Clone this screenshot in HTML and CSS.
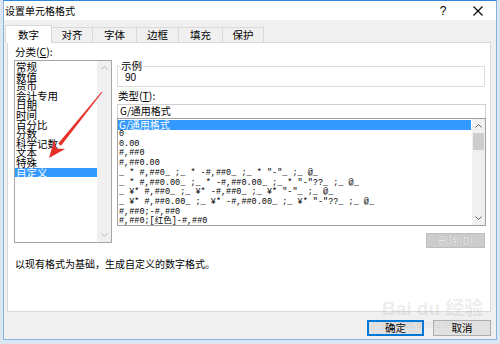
FILE: index.html
```html
<!DOCTYPE html>
<html lang="zh-CN">
<head>
    <meta charset="UTF-8">
    <meta name="viewport" content="width=device-width, initial-scale=1.0">
    <title>设置单元格格式</title>
    <link rel="stylesheet" href="styles.css">
</head>
<body>
    <div class="dialog">
        <!-- 标题栏 -->
        <div class="titlebar">
            <span class="title">设置单元格格式</span>
            <span class="help">?</span>
            <span class="close">
                <svg width="10" height="10" viewBox="0 0 10 10"><path d="M0.5 0.5 L9.5 9.5 M9.5 0.5 L0.5 9.5" stroke="#000" stroke-width="1.1" fill="none"/></svg>
            </span>
        </div>

        <!-- 选项卡 -->
        <div class="tabs">
            <span class="tab active w47">数字</span>
            <span class="tab w42">对齐</span>
            <span class="tab w45">字体</span>
            <span class="tab w43">边框</span>
            <span class="tab w45">填充</span>
            <span class="tab w42">保护</span>
        </div>

        <div class="panel">
            <div class="cols">
                <div class="left">
                    <div class="label">分类(<u>C</u>):</div>
                    <div class="listbox catlist">
                        <ul class="items">
                            <li>常规</li>
                            <li>数值</li>
                            <li>货币</li>
                            <li>会计专用</li>
                            <li>日期</li>
                            <li>时间</li>
                            <li>百分比</li>
                            <li>分数</li>
                            <li>科学记数</li>
                            <li>文本</li>
                            <li>特殊</li>
                            <li class="selected">自定义</li>
                        </ul>
                        <div class="scroll">
                            <span class="arrow-btn"><svg width="7" height="4" viewBox="0 0 7 4"><path d="M0.5 3.5 L3.5 0.5 L6.5 3.5" fill="none" stroke="#b4b4b4"/></svg></span>
                            <span class="arrow-btn"><svg width="7" height="4" viewBox="0 0 7 4"><path d="M0.5 0.5 L3.5 3.5 L6.5 0.5" fill="none" stroke="#b4b4b4"/></svg></span>
                        </div>
                    </div>
                </div>

                <div class="right">
                    <fieldset class="sample">
                        <legend>示例</legend>
                        <div class="sample-value">90</div>
                    </fieldset>
                    <div class="label type-label">类型(<u>T</u>):</div>
                    <div class="input">G/通用格式</div>
                    <div class="listbox typelist">
                        <ul class="codes">
                            <li class="selected cjk">G/通用格式</li>
                            <li>0</li>
                            <li>0.00</li>
                            <li>#,##0</li>
                            <li>#,##0.00</li>
                            <li>_ * #,##0_ ;_ * -#,##0_ ;_ * "-"_ ;_ @_ </li>
                            <li>_ * #,##0.00_ ;_ * -#,##0.00_ ;_ * "-"??_ ;_ @_ </li>
                            <li>_ ¥* #,##0_ ;_ ¥* -#,##0_ ;_ ¥* "-"_ ;_ @_ </li>
                            <li>_ ¥* #,##0.00_ ;_ ¥* -#,##0.00_ ;_ ¥* "-"??_ ;_ @_ </li>
                            <li>#,##0;-#,##0</li>
                            <li>#,##0;[红色]-#,##0</li>
                        </ul>
                        <div class="scroll narrow">
                            <span class="arrow-btn"><svg width="7" height="4" viewBox="0 0 7 4"><path d="M0.5 3.5 L3.5 0.5 L6.5 3.5" fill="none" stroke="#606060"/></svg></span>
                            <span class="thumb"></span>
                            <span class="track"></span>
                            <span class="arrow-btn"><svg width="7" height="4" viewBox="0 0 7 4"><path d="M0.5 0.5 L3.5 3.5 L6.5 0.5" fill="none" stroke="#606060"/></svg></span>
                        </div>
                    </div>
                    <div class="del-row">
                        <button class="btn disabled">删除(D)</button>
                    </div>
                </div>
            </div>
            <p class="desc">以现有格式为基础，生成自定义的数字格式。</p>
        </div>

        <div class="footer">
            <button class="btn ok">确定</button>
            <button class="btn cancel">取消</button>
        </div>
    </div>

    <!-- 红色箭头标注 -->
    <svg class="mark" width="500" height="344" viewBox="0 0 500 344">
        <polygon points="102.4,92.3 101.6,91.7 58.2,143.6 61,145.8" fill="#e8302a"/>
        <polygon points="49,158 54.1,140.3 56.5,148.6 65.1,149.1" fill="#e8302a"/>
    </svg>

    <div class="watermark">
        <span class="wm-big">Bai du 经验</span>
        <span class="wm-small">jingyan.baidu.com</span>
    </div>
</body>
</html>
```

FILE: styles.css
```css
* {
    box-sizing: border-box;
}
body {
    margin: 0;
    width: 500px;
    height: 344px;
    overflow: hidden;
    position: relative;
    background: #dce6f1;
    font-family: "Noto Sans CJK SC", sans-serif;
    font-size: 10px;
    color: #000;
}
.dialog {
    margin-left: 3px;
    width: 494px;
    height: 340px;
    border: 1px solid #86b3e3;
    border-top-color: #2b88d8;
    background: #f0f0f0;
    display: flex;
    flex-direction: column;
}
.titlebar {
    height: 19px;
    background: #fff;
    display: flex;
    align-items: center;
    padding-left: 1px;
}
.title {
    font-size: 10px;
    line-height: 12px;
}
.help, .close {
    width: 30px;
    height: 19px;
    display: flex;
    align-items: center;
    justify-content: center;
}
.help {
    margin-left: auto;
    font-family: "Liberation Sans", sans-serif;
    font-size: 12px;
}
.close {
    margin-left: 5px;
    margin-right: 3px;
}

/* 选项卡 */
.tabs {
    height: 22px;
    display: flex;
    align-items: flex-end;
    padding-left: 1px;
}
.tab {
    height: 15px;
    border: 1px solid #d9d9d9;
    border-bottom: none;
    margin-left: -1px;
    background: #f0f0f0;
    font-size: 10.5px;
    line-height: 12px;
    display: flex;
    align-items: center;
    justify-content: center;
}
.tab.active {
    margin-left: 0;
    height: 18px;
    margin-bottom: -1px;
    background: #fff;
    position: relative;
    z-index: 1;
}
.w42 { width: 42px; }
.w43 { width: 43px; }
.w45 { width: 45px; }
.w47 { width: 47px; }

.panel {
    margin: 0 5px 0 3px;
    height: 270px;
    border: 1px solid #d9d9d9;
    background: #fff;
    padding: 3px 4px 0 6px;
}
.cols {
    display: flex;
    gap: 5px;
}
.left {
    width: 98px;
}
.right {
    width: 369px;
}
.label {
    line-height: 12px;
    font-size: 10.5px;
    margin: 0 0 2px 1px;
}
.listbox {
    display: flex;
    border: 1px solid #a5a5a5;
}
.catlist {
    height: 183px;
}
.items, .codes {
    flex: 1;
    list-style: none;
    margin: 0;
    padding: 1px 0 0 0;
    overflow: hidden;
}
.items {
    font-size: 10.5px;
    line-height: 9.6px;
}
.items li, .codes li {
    padding-left: 1px;
    white-space: pre;
}
.selected {
    background: #3399ff;
    color: #fff;
}
.scroll {
    width: 14px;
    background: #f0f0f0;
    display: flex;
    flex-direction: column;
    justify-content: space-between;
}
.scroll.narrow {
    width: 13px;
    justify-content: flex-start;
}
.arrow-btn {
    height: 14px;
    display: flex;
    align-items: center;
    justify-content: center;
}
.thumb {
    height: 17px;
    margin: 0 1px;
    background: #cdcdcd;
}
.track {
    flex: 1;
}

/* 右侧 */
.sample {
    margin: 14px 0 0;
    min-width: 0;
    width: 368px;
    border: 1px solid #dcdcdc;
    padding: 0 6px 2px;
}
.sample legend {
    font-size: 10.5px;
    line-height: 12px;
    padding: 0 1px;
    margin-left: -4px;
}
.sample-value {
    font-family: "Liberation Sans", sans-serif;
    font-size: 10px;
    line-height: 12px;
    padding-left: 1px;
}
.type-label {
    margin-top: 3px;
}
.input {
    height: 14px;
    border: 1px solid #d0d0d0;
    border-bottom: none;
    font-size: 10px;
    line-height: 12px;
    padding-left: 2px;
}
.typelist {
    height: 108px;
    border-color: #a0a0a0;
}
.codes {
    padding-top: 0;
    font-family: "Liberation Mono", "Noto Sans CJK SC", monospace;
    font-size: 8.5px;
    line-height: 9.7px;
}
.codes li.cjk {
    font-family: "Noto Sans CJK SC", sans-serif;
    font-size: 10px;
    line-height: 10px;
    margin-top: 1px;
    margin-right: 1px;
}
.del-row {
    display: flex;
    justify-content: flex-end;
    margin: 7px 1px 0 0;
}
.btn {
    font-family: "Noto Sans CJK SC", sans-serif;
    font-size: 10.5px;
    line-height: 12px;
    padding: 0;
    background: #e1e1e1;
    border: 1px solid #adadad;
    color: #000;
}
.btn.disabled {
    width: 59px;
    height: 15px;
    background: #cccccc;
    border-color: #bfbfbf;
    color: #ececec;
    text-shadow: 0 0 1px #9a9a9a;
}
.desc {
    margin: 10px 0 0 1px;
    font-size: 10px;
    line-height: 12px;
}

.footer {
    display: flex;
    justify-content: flex-end;
    gap: 9px;
    padding: 8px 5px 0 0;
}
.ok, .cancel {
    height: 16px;
}
.ok {
    width: 57px;
    border-color: #0078d7;
    box-shadow: inset 0 0 0 1px #0078d7;
}
.cancel {
    width: 58px;
}

.mark {
    position: absolute;
    left: 0;
    top: 0;
}
.watermark {
    position: absolute;
    left: 382px;
    top: 298px;
    display: flex;
    flex-direction: column;
    color: rgba(150, 150, 150, 0.18);
    font-family: "Liberation Sans", "Noto Sans CJK SC", sans-serif;
}
.wm-big {
    font-size: 19px;
    font-weight: bold;
    line-height: 22px;
}
.wm-small {
    font-size: 10px;
    line-height: 10px;
}
```
